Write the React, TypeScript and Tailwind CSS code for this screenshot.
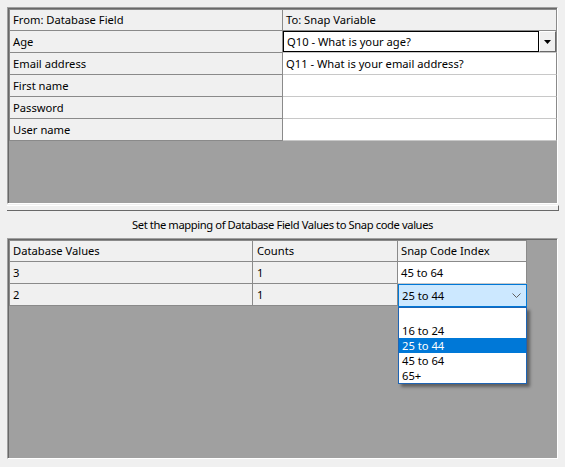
import React from 'react';

const topRows = [
  { field: 'Age', variable: 'Q10 - What is your age?', combo: true },
  { field: 'Email address', variable: 'Q11 - What is your email address?' },
  { field: 'First name', variable: '' },
  { field: 'Password', variable: '' },
  { field: 'User name', variable: '' },
];

const valueRows = [
  { value: '3', count: '1', index: '45 to 64' },
  { value: '2', count: '1', index: '25 to 44', active: true },
];

const options = ['', '16 to 24', '25 to 44', '45 to 64', '65+'];

function Frame({ height, children }: { height: string; children: React.ReactNode }) {
  return (
    <div
      className={`w-[551px] ${height} border border-t-[#a0a0a0] border-l-[#a0a0a0] border-r-white border-b-white`}
    >
      <div className="h-full bg-[#a0a0a0] border-l border-t border-[#696969]">{children}</div>
    </div>
  );
}

export default function App() {
  return (
    <div className="w-[565px] h-[467px] bg-[#f0f0f0] pl-[7px] pt-[7px] text-[11.2px] leading-none text-black font-['Noto_Sans',sans-serif] overflow-hidden">
      {/* Field mapping grid */}
      <Frame height="h-[197px]">
        <div className="flex h-[22px]">
          <div className="w-[274px] flex items-center pl-[3px] bg-[#f0f0f0] border border-[#8a8a8a]">
            From: Database Field
          </div>
          <div className="w-[274px] flex items-center pl-[3px] bg-[#f0f0f0] border-t border-r border-b border-[#8a8a8a]">
            To: Snap Variable
          </div>
        </div>
        {topRows.map((r) => (
          <div key={r.field} className="flex h-[22px]">
            <div className="w-[274px] flex items-center pl-[3px] bg-[#f0f0f0] border-l border-r border-b border-[#8a8a8a]">
              {r.field}
            </div>
            {r.combo ? (
              <div className="w-[274px] flex bg-white border-r border-r-[#8a8a8a] border-b border-b-[#c8c8c8]">
                <div className="w-[256px] flex items-center pl-[3px] border border-black">{r.variable}</div>
                <div className="w-[17px] flex items-center justify-center bg-[#f0f0f0] border border-t-white border-l-white border-r-[#696969] border-b-[#696969]">
                  <svg width="7" height="4" viewBox="0 0 7 4">
                    <polygon points="0,0 7,0 3.5,4" fill="#000" />
                  </svg>
                </div>
              </div>
            ) : (
              <div className="w-[274px] flex items-center pl-[3px] bg-white border-r border-r-[#8a8a8a] border-b border-b-[#c8c8c8]">
                {r.variable}
              </div>
            )}
          </div>
        ))}
      </Frame>

      {/* Splitter */}
      <div className="mt-[1px] w-[552px] h-[6px] bg-[#f0f0f0] border-t border-t-white border-b border-b-[#696969] border-r border-r-[#696969]" />

      <div className="w-[551px] h-[27px] flex items-center justify-center tracking-[-0.4px]">
        Set the mapping of Database Field Values to Snap code values
      </div>

      {/* Value mapping grid */}
      <Frame height="h-[221px]">
        <div className="flex h-[22px]">
          <div className="w-[244px] flex items-center pl-[3px] bg-[#f0f0f0] border border-[#8a8a8a]">
            Database Values
          </div>
          <div className="w-[145px] flex items-center pl-[4px] bg-[#f0f0f0] border-t border-r border-b border-[#8a8a8a]">
            Counts
          </div>
          <div className="w-[129px] flex items-center pl-[3px] bg-[#f0f0f0] border-t border-r border-b border-[#8a8a8a]">
            Snap Code Index
          </div>
        </div>
        {valueRows.map((r) => (
          <div key={r.value} className="flex h-[22px]">
            <div className="w-[244px] flex items-center pl-[3px] bg-[#f0f0f0] border-l border-r border-b border-[#8a8a8a]">
              {r.value}
            </div>
            <div className="w-[145px] flex items-center pl-[4px] bg-[#f0f0f0] border-r border-b border-[#8a8a8a]">
              {r.count}
            </div>
            {r.active ? (
              <div className="w-[129px] relative">
                <div className="absolute left-0 top-0 w-[129px] h-[23px] flex items-center justify-between pl-[3px] pr-[5px] bg-[#cce8ff] border border-[#0078d7]">
                  <span>{r.index}</span>
                  <svg width="9" height="5" viewBox="0 0 9 5">
                    <polyline points="0.5,0.5 4.5,4.5 8.5,0.5" fill="none" stroke="#606060" strokeWidth="1" />
                  </svg>
                </div>
                <div className="absolute left-0 top-[23px] w-[129px] border border-[#1e64b4] bg-white shadow-[3px_3px_3px_rgba(0,0,0,0.4)] z-10">
                  {options.map((o, i) => (
                    <div
                      key={i}
                      className={`h-[15px] leading-[15px] pl-[3px] overflow-hidden ${o === r.index ? 'bg-[#0078d7] text-white' : ''}`}
                    >
                      {o}
                    </div>
                  ))}
                </div>
              </div>
            ) : (
              <div className="w-[129px] flex items-center pl-[3px] bg-white border-r border-r-[#8a8a8a] border-b border-b-[#c8c8c8]">
                {r.index}
              </div>
            )}
          </div>
        ))}
      </Frame>
    </div>
  );
}
